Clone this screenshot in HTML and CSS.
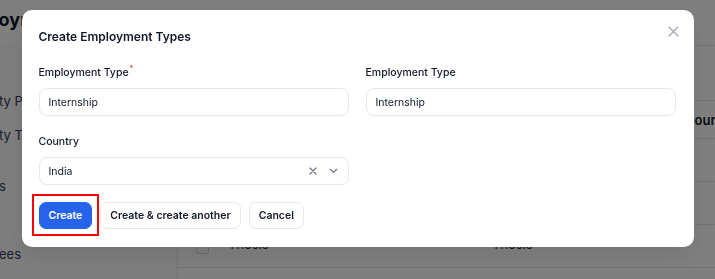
FILE: index.html
```html
<!DOCTYPE html>
<html lang="en">
<head>
<meta charset="utf-8">
<title>Create Employment Types</title>
<link rel="stylesheet" href="styles.css">
</head>
<body>
<div class="page">
  <header class="page-header">
    <h1 class="page-title">Employment Types</h1>
  </header>
  <div class="page-body">
    <nav class="sidebar">
      <a class="nav-item nav-1">ty Plans</a>
      <a class="nav-item nav-2">ty Types</a>
      <a class="nav-item nav-3">s</a>
      <a class="nav-item nav-4">ees</a>
    </nav>
    <main class="main">
      <div class="table-card">
        <div class="toolbar"></div>
        <div class="row head-row">
          <span class="cell cell-check"></span>
          <span class="cell cell-name">Name</span>
          <span class="cell cell-code">Code</span>
          <span class="cell cell-country">Country</span>
        </div>
        <div class="row"><span class="cell cell-check"><span class="checkbox"></span></span><span class="cell cell-name">Full Time</span><span class="cell cell-code">Full Time</span></div>
        <div class="row"><span class="cell cell-check"><span class="checkbox"></span></span><span class="cell cell-name">Part Time</span><span class="cell cell-code">Part Time</span></div>
        <div class="row"><span class="cell cell-check"><span class="checkbox"></span></span><span class="cell cell-name">Thesis</span><span class="cell cell-code">Thesis</span></div>
        <div class="row"></div>
      </div>
    </main>
  </div>
</div>

<div class="overlay">
  <div class="modal" role="dialog" aria-labelledby="modal-title">
    <button class="close-btn" aria-label="Close">
      <svg width="11" height="11" viewBox="0 0 11 11" fill="none" stroke="currentColor" stroke-width="1.1" stroke-linecap="round"><path d="M1 1L10 10M10 1L1 10"/></svg>
    </button>
    <h2 class="modal-title" id="modal-title">Create Employment Types</h2>
    <div class="form-grid">
      <div class="field">
        <label class="label">Employment Type<sup class="req">*</sup></label>
        <div class="input">Internship</div>
      </div>
      <div class="field">
        <label class="label">Employment Type</label>
        <div class="input">Internship</div>
      </div>
      <div class="field">
        <label class="label">Country</label>
        <div class="input select">
          <span class="select-value">India</span>
          <span class="select-icons">
            <svg class="clear-icon" width="8" height="8" viewBox="0 0 8 8" fill="none" stroke="currentColor" stroke-width="1.2" stroke-linecap="round"><path d="M1 1L7 7M7 1L1 7"/></svg>
            <svg class="chev-icon" width="9" height="6" viewBox="0 0 9 6" fill="none" stroke="currentColor" stroke-width="1.2" stroke-linecap="round" stroke-linejoin="round"><path d="M1.2 1.3L4.5 4.4L7.8 1.3"/></svg>
          </span>
        </div>
      </div>
    </div>
    <div class="actions">
      <span class="highlight"><button class="btn btn-primary">Create</button></span>
      <button class="btn">Create &amp; create another</button>
      <button class="btn">Cancel</button>
    </div>
  </div>
</div>
</body>
</html>
```
FILE: styles.css
```css
* { box-sizing: border-box; }
html, body { margin: 0; padding: 0; }
body {
  width: 715px;
  height: 279px;
  overflow: hidden;
  font-family: Inter, "Liberation Sans", sans-serif;
  background: #ffffff;
  color: #111827;
}

/* background page */
.page { display: flex; flex-direction: column; height: 279px; overflow: hidden; }
.page-header { height: 45px; flex: none; padding-top: 9px; }
.page-title {
  margin: 0 0 0 -45px;
  font-size: 18px;
  line-height: 22px;
  font-weight: 700;
  color: #0f172a;
  white-space: nowrap;
}
.page-body { display: flex; flex: none; }
.sidebar {
  width: 177px;
  flex: none;
  background: #fafafa;
  display: flex;
  flex-direction: column;
  font-size: 13px;
  color: #374151;
  padding-top: 48px;
}
.nav-item { display: block; white-space: nowrap; margin-left: -1px; height: 17px; line-height: 17px; }
.nav-2 { margin-top: 17px; }
.nav-3 { margin-top: 34px; }
.nav-4 { margin-top: 51px; }
.main { flex: 1; }
.table-card { border-left: 1px solid #e5e7eb; border-top: 1px solid #e5e7eb; }
.toolbar { height: 54px; }
.row {
  display: flex;
  align-items: center;
  height: 43px;
  border-top: 1px solid #e5e7eb;
  font-size: 13px;
  color: #1f2937;
}
.head-row { height: 38px; font-weight: 600; color: #111827; }
.cell { white-space: nowrap; }
.cell-name, .cell-code { padding-bottom: 4px; }
.cell-check { width: 50px; padding-left: 18px; padding-top: 3px; display: flex; align-items: center; }
.cell-name { width: 264px; }
.cell-code { width: 193px; }
.checkbox { width: 13px; height: 13px; border: 1px solid #d1d5db; border-radius: 3px; background: #fff; }

/* overlay + modal */
.overlay {
  position: fixed;
  inset: 0;
  background: rgba(0, 0, 0, 0.5);
  display: flex;
  justify-content: center;
  align-items: flex-start;
  padding-top: 10px;
}
.modal {
  position: relative;
  width: 672px;
  background: #ffffff;
  border-radius: 10px;
  padding: 17px 17px 18px;
  box-shadow: 0 10px 20px rgba(0,0,0,0.08);
}
.close-btn {
  position: absolute;
  top: 16px;
  right: 15px;
  width: 11px;
  height: 11px;
  padding: 0;
  border: 0;
  background: none;
  color: #9ca3af;
  display: flex;
}
.modal-title {
  margin: 0;
  font-size: 12px;
  line-height: 20px;
  font-weight: 600;
  color: #111827;
}
.form-grid {
  margin-top: 18px;
  display: grid;
  grid-template-columns: 310px 310px;
  column-gap: 17px;
  row-gap: 18px;
}
.field { display: flex; flex-direction: column; gap: 7px; }
.label {
  font-size: 10.5px;
  line-height: 16px;
  font-weight: 500;
  color: #111827;
}
.req { color: #dc2626; font-size: 7px; vertical-align: top; line-height: 8px; margin-left: 1px; }
.input {
  height: 28px;
  border: 1px solid #e5e7eb;
  border-radius: 8px;
  padding: 0 9px;
  display: flex;
  align-items: center;
  font-size: 10.5px;
  color: #111827;
  box-shadow: 0 1px 1px rgba(0,0,0,0.02);
}
.select { justify-content: space-between; height: 28px; padding-right: 10px; }
.select-icons { display: flex; align-items: center; gap: 12px; color: #6b7280; }
.clear-icon { color: #6b7280; }
.chev-icon { color: #6b7280; }
.actions { margin-top: 17px; display: flex; gap: 8px; }
.highlight { position: relative; display: flex; }
.highlight::after {
  content: "";
  position: absolute;
  inset: -8px -7px -7px -7px;
  border: 2px solid #f00;
  pointer-events: none;
}
.btn {
  height: 27px;
  padding: 0 9px;
  border: 1px solid #e5e7eb;
  border-radius: 7px;
  background: #ffffff;
  font-family: inherit;
  font-size: 10.5px;
  font-weight: 600;
  color: #111827;
}
.btn-primary {
  background: #2563eb;
  border-color: #2563eb;
  color: #ffffff;
  padding: 0 9px;
}
```
